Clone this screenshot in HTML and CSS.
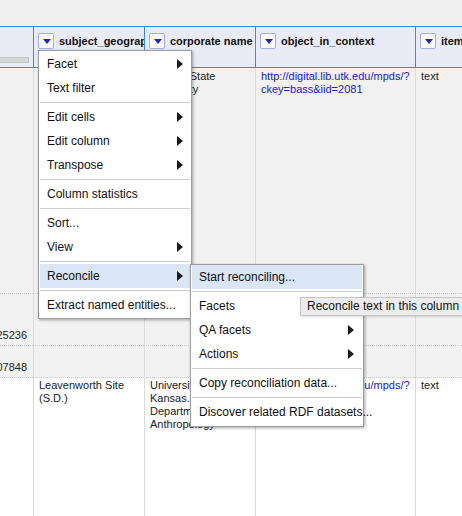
FILE: index.html
```html
<!DOCTYPE html>
<html>
<head>
<meta charset="utf-8">
<link rel="stylesheet" href="styles.css">
</head>
<body>
<div class="topband"></div>
<div class="table">
  <div class="row head">
    <div class="hcell first"><div class="hscroll"></div></div>
    <div class="hcell"><span class="dd"><i></i></span><span class="hname">subject_geographic</span></div>
    <div class="hcell"><span class="dd"><i></i></span><span class="hname">corporate name</span></div>
    <div class="hcell"><span class="dd"><i></i></span><span class="hname">object_in_context</span></div>
    <div class="hcell"><span class="dd"><i></i></span><span class="hname">item_url</span></div>
  </div>
  <div class="row r1">
    <div class="cell first"></div>
    <div class="cell">Tennessee</div>
    <div class="cell">Kansas State University</div>
    <div class="cell link"><a href="#">http://digital.lib.utk.edu/mpds/?ckey=bass&amp;iid=2081</a></div>
    <div class="cell">text</div>
  </div>
  <div class="row r2">
    <div class="cell first num n2">25236</div>
    <div class="cell"></div>
    <div class="cell"></div>
    <div class="cell"></div>
    <div class="cell"></div>
  </div>
  <div class="row r3">
    <div class="cell first num n3">07848</div>
    <div class="cell"></div>
    <div class="cell"></div>
    <div class="cell"></div>
    <div class="cell"></div>
  </div>
  <div class="row r4">
    <div class="cell first"></div>
    <div class="cell">Leavenworth Site (S.D.)</div>
    <div class="cell">University of Kansas. Department of Anthropology</div>
    <div class="cell link"><a href="#">http://digital.lib.utk.edu/mpds/?ckey=bass&amp;iid=21</a></div>
    <div class="cell">text</div>
  </div>
</div>

<div class="menu main-menu">
  <div class="item sub">Facet</div>
  <div class="item">Text filter</div>
  <div class="sep"></div>
  <div class="item sub">Edit cells</div>
  <div class="item sub">Edit column</div>
  <div class="item sub">Transpose</div>
  <div class="sep"></div>
  <div class="item">Column statistics</div>
  <div class="sep"></div>
  <div class="item">Sort...</div>
  <div class="item sub">View</div>
  <div class="sep"></div>
  <div class="item sub active">Reconcile</div>
  <div class="sep"></div>
  <div class="item">Extract named entities...</div>
</div>

<div class="menu sub-menu">
  <div class="item active">Start reconciling...</div>
  <div class="sep"></div>
  <div class="item">Facets</div>
  <div class="item sub">QA facets</div>
  <div class="item sub">Actions</div>
  <div class="sep"></div>
  <div class="item">Copy reconciliation data...</div>
  <div class="sep"></div>
  <div class="item">Discover related RDF datasets...</div>
</div>

<div class="tooltip">Reconcile text in this column</div>
</body>
</html>
```
FILE: styles.css
```css
html, body {
  margin: 0;
  padding: 0;
}
body {
  width: 462px;
  height: 516px;
  overflow: hidden;
  position: relative;
  background: #ffffff;
  font-family: "Liberation Sans", Arial, sans-serif;
  color: #222;
}
.topband {
  height: 26px;
  background: #f0f0f0;
}
.row {
  display: grid;
  grid-template-columns: 33px 111px 111px 160px 1fr;
}
.head {
  height: 40px;
  border-top: 1px solid #3c8bd3;
  border-bottom: 1px solid #3c8bd3;
  background: #e9ebf7;
}
.hcell {
  border-left: 1px solid #3c8bd3;
  display: flex;
  align-items: flex-start;
  gap: 5px;
  padding: 6px 0 0 4px;
  overflow: hidden;
  white-space: nowrap;
  min-width: 0;
}
.hcell.first {
  border-left: none;
  padding: 0;
  align-items: flex-end;
}
.hscroll {
  width: 28px;
  height: 4px;
  margin-bottom: 4px;
  background: #d8d8d8;
  border: 1px solid #c2c2c2;
  border-left: none;
}
.dd {
  flex: none;
  width: 14px;
  height: 14px;
  border: 1px solid #a4adf3;
  border-radius: 2px;
  background: #fbfbff;
  display: flex;
  align-items: center;
  justify-content: center;
}
.dd i {
  display: block;
  width: 0;
  height: 0;
  margin-left: 1px;
  border-top: 5px solid #2424c6;
  border-left: 4px solid transparent;
  border-right: 4px solid transparent;
}
.hname {
  font-size: 11px;
  font-weight: bold;
  line-height: 16px;
  color: #111;
}
.cell {
  border-left: 1px solid #dadada;
  border-bottom: 1px dotted #c8c8c8;
  padding: 2px 8px 2px 5px;
  font-size: 11px;
  line-height: 13px;
  overflow: hidden;
  min-width: 0;
}
.cell.first {
  border-left: none;
}
.cell.link {
  padding-right: 4px;
}
.cell a {
  color: #2121c9;
  text-decoration: none;
}
.r1, .r2, .r3 {
  background: #f2f2f2;
}
.r1 { height: 226px; }
.r2 { height: 52px; }
.r3 { height: 32px; }
.r4 { height: 160px; background: #ffffff; }
.r4 .cell { padding-top: 1px; }
.num {
  display: flex;
  justify-content: flex-end;
  padding-right: 6px;
  white-space: nowrap;
}
.n2 { padding-top: 35px; }
.n3 { padding-top: 15px; }

.menu {
  position: absolute;
  box-sizing: border-box;
  background: #ffffff;
  border: 1px solid #9d9d9d;
  box-shadow: 1px 1px 3px rgba(0, 0, 0, 0.35);
  padding: 1px;
  font-size: 12px;
  color: #111;
}
.main-menu {
  left: 38px;
  top: 50px;
  width: 154px;
}
.sub-menu {
  left: 190px;
  top: 264px;
  width: 174px;
  padding: 0 1px 2px;
}
.item {
  position: relative;
  height: 24px;
  line-height: 24px;
  padding-left: 7px;
  white-space: nowrap;
}
.item.active {
  background: #dae5f5;
}
.item.sub::after {
  content: "";
  position: absolute;
  right: 7px;
  top: 7px;
  width: 0;
  height: 0;
  border-left: 6px solid #1a1a1a;
  border-top: 5px solid transparent;
  border-bottom: 5px solid transparent;
}
.sub-menu .item.sub::after {
  right: 8px;
}
.sep {
  height: 1px;
  margin: 2px 0;
  background: #cfcfcf;
}
.tooltip {
  position: absolute;
  left: 300px;
  top: 297px;
  padding: 0 6px;
  line-height: 17px;
  font-size: 12px;
  color: #111;
  white-space: nowrap;
  background: #ececec;
  border: 1px solid #c6c6c6;
  box-shadow: 1px 1px 2px rgba(0, 0, 0, 0.15);
}
```
